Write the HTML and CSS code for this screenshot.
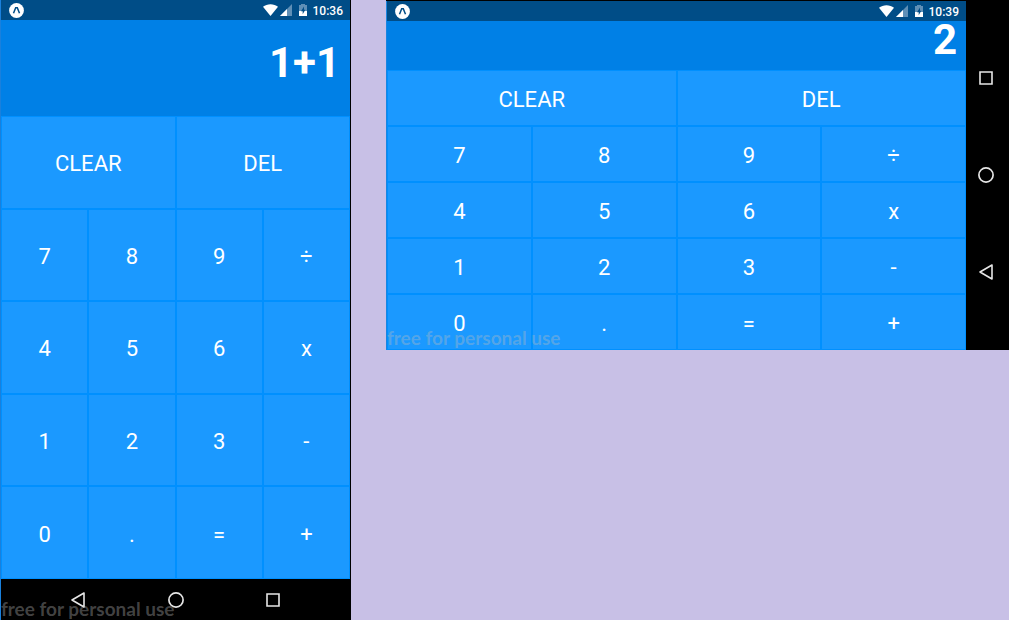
FILE: index.html
```html
<!DOCTYPE html>
<html lang="en">
<head>
<meta charset="utf-8">
<meta name="viewport" content="width=device-width, initial-scale=1">
<title>Calculator</title>
<link rel="stylesheet" href="styles.css">
</head>
<body>
<svg class="symbols" aria-hidden="true">
  <symbol id="logo" viewBox="0 0 15 15">
    <circle cx="7.500" cy="7.500" r="7.400" fill="#fff"/>
    <path d="M4.500 10.300 6.700 4.800H8.300L10.500 10.300" fill="none" stroke="#004d87" stroke-width="1.500"/>
  </symbol>
  <symbol id="wifi" viewBox="0 0 15 12">
    <path d="M0 2.800C4-.6 11-.6 15 2.800L7.500 12Z" fill="#fff"/>
  </symbol>
  <symbol id="signal" viewBox="0 0 12 12">
    <path d="M0 12 12 0V12Z" fill="#5f8fb6"/>
    <path d="M0 12 7 5V12Z" fill="#fff"/>
  </symbol>
  <symbol id="battery" viewBox="0 0 8 12">
    <path d="M2 0H6V1H8V12H0V1H2Z" fill="#5f8fb6"/>
    <path d="M0 7H8V12H0Z" fill="#fff"/>
    <path d="M5 2.500 2 7.200H3.700V10.200L6.300 5.800H5Z" fill="#004d87"/>
  </symbol>
  <symbol id="back" viewBox="0 0 16 18">
    <path d="M14 2V16L2 9Z" fill="none" stroke="#e6e6e6" stroke-width="1.600" stroke-linejoin="round"/>
  </symbol>
  <symbol id="home" viewBox="0 0 16 16">
    <circle cx="8" cy="8" r="7.100" fill="none" stroke="#e6e6e6" stroke-width="1.700"/>
  </symbol>
  <symbol id="recent" viewBox="0 0 14 14">
    <path d="M1 1H13V13H1Z" fill="none" stroke="#e6e6e6" stroke-width="1.600"/>
  </symbol>
</svg>
<main class="gallery">
  <section class="phone portrait" aria-label="Portrait calculator">
    <div class="app">
      <header class="status">
        <svg class="logo"><use href="#logo"/></svg>
        <svg class="wifi"><use href="#wifi"/></svg>
        <svg class="signal"><use href="#signal"/></svg>
        <svg class="battery"><use href="#battery"/></svg>
        <time class="time">10:36</time>
      </header>
      <output class="display">1+1</output>
      <div class="keys">
        <button class="key wide">CLEAR</button><button class="key wide">DEL</button>
        <button class="key">7</button><button class="key">8</button><button class="key">9</button><button class="key">÷</button>
        <button class="key">4</button><button class="key">5</button><button class="key">6</button><button class="key">x</button>
        <button class="key">1</button><button class="key">2</button><button class="key">3</button><button class="key">-</button>
        <button class="key">0</button><button class="key">.</button><button class="key">=</button><button class="key">+</button>
      </div>
    </div>
    <nav class="nav">
      <button class="nav-button" aria-label="Back"><svg class="back"><use href="#back"/></svg></button>
      <button class="nav-button" aria-label="Home"><svg class="home"><use href="#home"/></svg></button>
      <button class="nav-button" aria-label="Recent apps"><svg class="recent"><use href="#recent"/></svg></button>
    </nav>
    <p class="watermark">free for personal use</p>
  </section>
  <section class="phone landscape" aria-label="Landscape calculator">
    <div class="app">
      <header class="status">
        <svg class="logo"><use href="#logo"/></svg>
        <svg class="wifi"><use href="#wifi"/></svg>
        <svg class="signal"><use href="#signal"/></svg>
        <svg class="battery"><use href="#battery"/></svg>
        <time class="time">10:39</time>
      </header>
      <output class="display">2</output>
      <div class="keys">
        <button class="key wide">CLEAR</button><button class="key wide">DEL</button>
        <button class="key">7</button><button class="key">8</button><button class="key">9</button><button class="key">÷</button>
        <button class="key">4</button><button class="key">5</button><button class="key">6</button><button class="key">x</button>
        <button class="key">1</button><button class="key">2</button><button class="key">3</button><button class="key">-</button>
        <button class="key">0</button><button class="key">.</button><button class="key">=</button><button class="key">+</button>
      </div>
    </div>
    <nav class="nav">
      <button class="nav-button" aria-label="Recent apps"><svg class="recent"><use href="#recent"/></svg></button>
      <button class="nav-button" aria-label="Home"><svg class="home"><use href="#home"/></svg></button>
      <button class="nav-button" aria-label="Back"><svg class="back"><use href="#back"/></svg></button>
    </nav>
    <p class="watermark">free for personal use</p>
  </section>
</main>
</body>
</html>
```
FILE: styles.css
```css
* {
  box-sizing: border-box;
}

body {
  margin: 0;
  background: #c8c0e6;
  color: #fff;
  font-family: Roboto, sans-serif;
}

button {
  margin: 0;
  padding: 0;
  color: inherit;
  font: inherit;
}

svg {
  display: block;
}

.symbols {
  display: none;
}

.gallery {
  display: grid;
  grid-template-columns: minmax(0, 351fr) minmax(0, 623fr);
  gap: 35px;
  align-items: start;
}

.phone {
  position: relative;
  display: flex;
  background: #000;
}

.app {
  display: flex;
  flex: 1;
  flex-direction: column;
  min-width: 0;
}

.portrait {
  flex-direction: column;
  min-height: 100vh;
  border-left: 1px solid #1a80dc;
  border-right: 1px solid #000;
}

.landscape {
  border-top: 1px solid #000;
}

.landscape .app {
  border-left: 1px solid #1a85e0;
}

.status {
  display: flex;
  align-items: center;
  height: 20px;
  padding: 0 7px 0 8px;
  background: #004d87;
}

.logo {
  width: 15px;
  height: 15px;
  margin-right: auto;
}

.wifi {
  width: 15px;
  height: 12px;
  margin-right: 2px;
}

.signal {
  width: 12px;
  height: 12px;
  margin-right: 7px;
}

.battery {
  width: 8px;
  height: 12px;
  margin-right: 6px;
}

.time {
  padding-top: 1px;
  font-size: 12px;
  font-weight: 500;
  line-height: 18px;
}

.display {
  padding: 25px 10px 35px;
  background: #0080e6;
  font-size: 42px;
  font-weight: 700;
  line-height: 36px;
  text-align: right;
}

.landscape .display {
  padding-top: 1px;
  padding-right: 9px;
  padding-bottom: 12px;
}

.keys {
  display: grid;
  flex: 1;
  grid-template-columns: repeat(4, minmax(0, 1fr));
  grid-auto-rows: minmax(56px, 1fr);
}

.key {
  padding-top: 4px;
  border: 1px solid #0090ff;
  background: #1b99ff;
  font-size: 22px;
  line-height: 26px;
}

.wide {
  grid-column: span 2;
}

.nav {
  display: flex;
  align-items: center;
  justify-content: center;
}

.portrait .nav {
  height: 41px;
}

.landscape .nav {
  flex-direction: column;
  width: 43px;
  padding: 0 3px 1px 0;
}

.nav-button {
  display: grid;
  flex: 0 0 28%;
  place-items: center;
  border: 0;
  background: none;
}

.back {
  width: 16px;
  height: 18px;
}

.home {
  width: 16px;
  height: 16px;
}

.recent {
  width: 14px;
  height: 14px;
}

.watermark {
  position: absolute;
  bottom: 0;
  left: 0;
  margin: 0;
  color: rgba(190, 190, 190, 0.36);
  font-family: Lato, sans-serif;
  font-size: 19px;
  font-weight: 700;
  line-height: 22px;
  pointer-events: none;
}

.landscape .watermark {
  bottom: 1px;
  left: 1px;
}
```
